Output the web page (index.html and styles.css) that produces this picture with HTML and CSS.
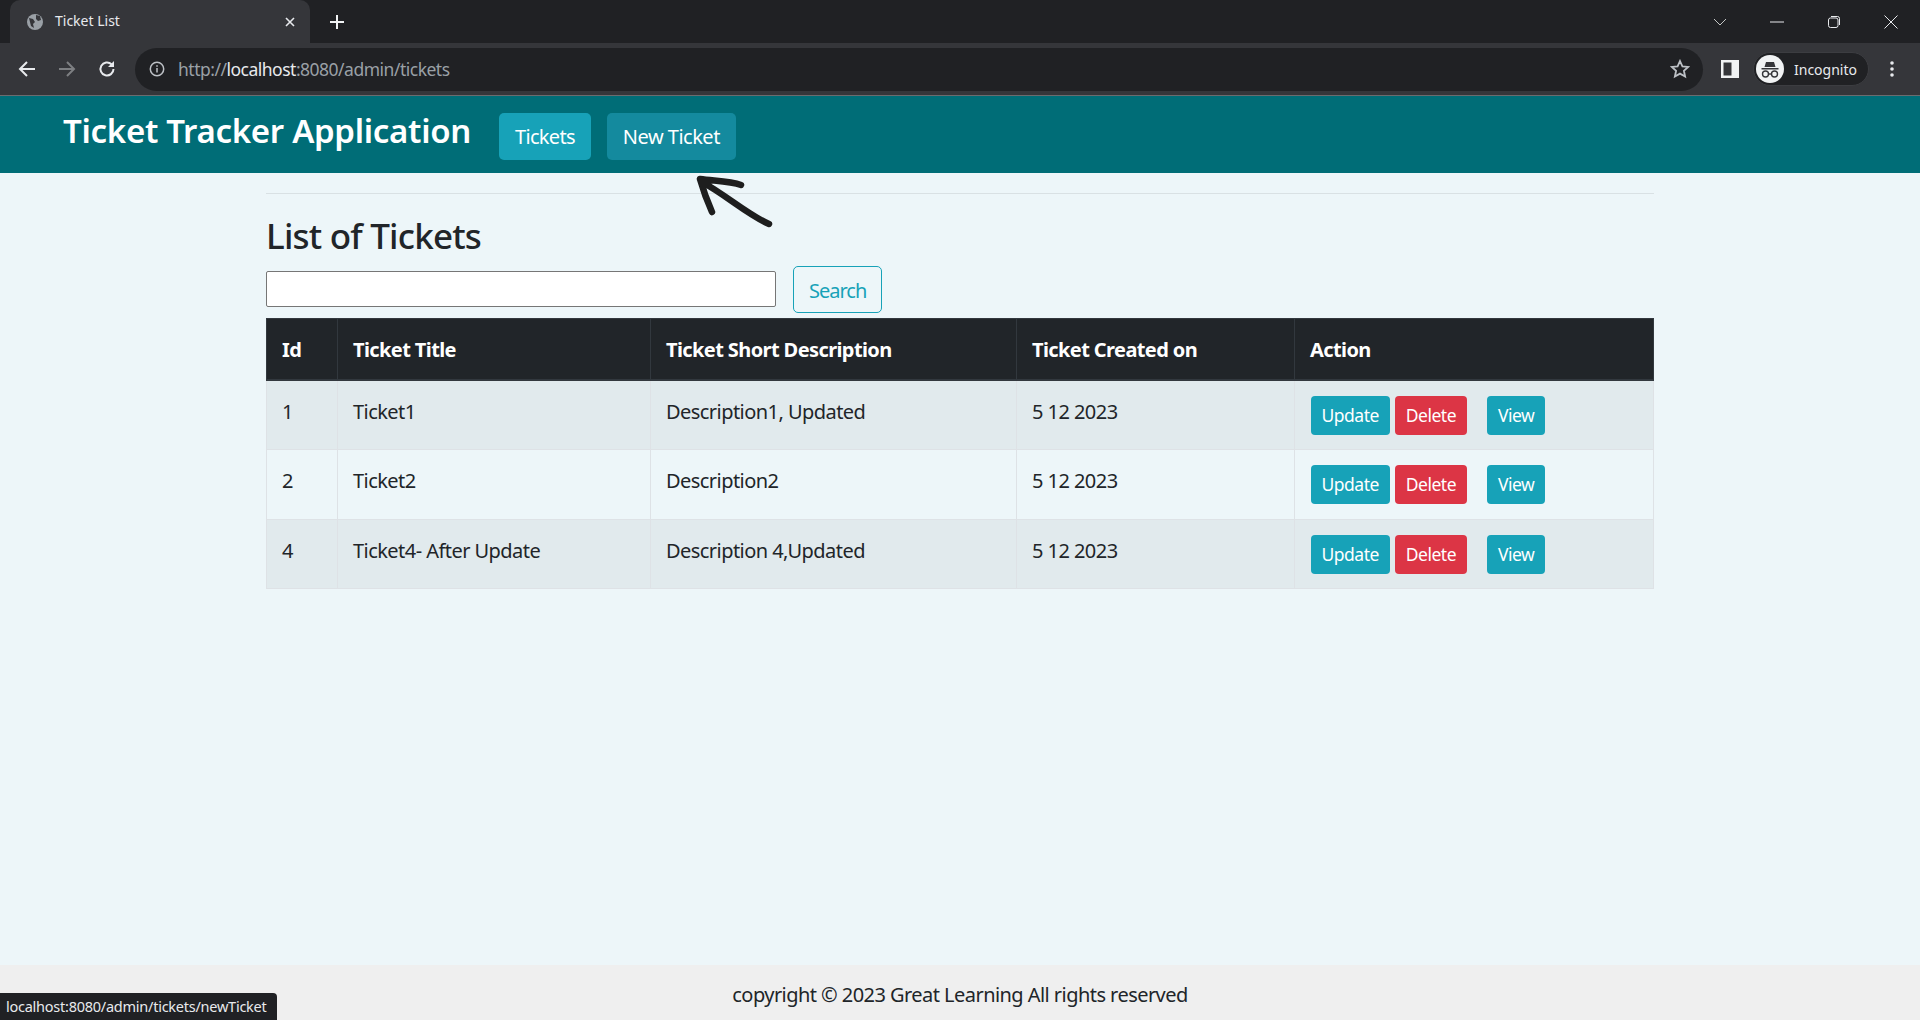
FILE: index.html
```html
<!DOCTYPE html>
<html lang="en">
<head>
    <meta charset="UTF-8">
    <meta name="viewport" content="width=device-width, initial-scale=1.0">
    <title>Ticket List</title>
    <link rel="stylesheet" href="styles.css">
</head>
<body>
    <div class="chrome">
        <div class="tabstrip">
            <div class="tab">
                <svg class="favicon" width="18" height="18" viewBox="0 0 18 18"><circle cx="9" cy="9" r="8" fill="#9aa0a6"/><path d="M3 5l4 1 2 3-2 2 1 4-3-2-1-4zM10 2l4 1 1 4-3 1-2-2z" fill="#35363a"/></svg>
                <span class="tab-title">Ticket List</span>
                <svg class="tab-close" width="12" height="12" viewBox="0 0 12 12"><path d="M2 2l8 8M10 2l-8 8" stroke="#e8eaed" stroke-width="1.6"/></svg>
            </div>
            <svg class="new-tab" width="16" height="16" viewBox="0 0 16 16"><path d="M8 1v14M1 8h14" stroke="#f1f3f4" stroke-width="2"/></svg>
            <div class="window-btns">
                <svg width="14" height="14" viewBox="0 0 14 14"><path d="M1 4l6 6 6-6" fill="none" stroke="#c4c7c5" stroke-width="1"/></svg>
                <svg width="14" height="14" viewBox="0 0 14 14"><path d="M0 7h14" stroke="#e8eaed" stroke-width="1"/></svg>
                <svg width="14" height="14" viewBox="0 0 14 14"><rect x="1.5" y="3" width="9.500" height="9.500" rx="2" fill="none" stroke="#e8eaed"/><path d="M4 1.500h6.500a2 2 0 0 1 2 2V10" fill="none" stroke="#e8eaed"/></svg>
                <svg width="14" height="14" viewBox="0 0 14 14"><path d="M0.500 0.500l13 13M13.500 0.500l-13 13" stroke="#e8eaed" stroke-width="1"/></svg>
            </div>
        </div>
        <div class="toolbar">
            <svg class="nav-icon" width="18" height="18" viewBox="0 0 18 18"><path d="M17 9H2M9 2L2 9l7 7" fill="none" stroke="#e8eaed" stroke-width="2"/></svg>
            <svg class="nav-icon" width="18" height="18" viewBox="0 0 18 18"><path d="M1 9h15M9 2l7 7-7 7" fill="none" stroke="#7d7f82" stroke-width="2"/></svg>
            <svg class="nav-icon" width="18" height="18" viewBox="0 0 18 18"><path d="M15.500 9a6.500 6.500 0 1 1-2-4.700" fill="none" stroke="#e8eaed" stroke-width="2"/><path d="M16 1v6h-6z" fill="#e8eaed"/></svg>
            <div class="omnibox">
                <svg width="16" height="16" viewBox="0 0 16 16"><circle cx="8" cy="8" r="6.700" fill="none" stroke="#bdc1c6" stroke-width="1.500"/><path d="M8 7v4.500M8 4.200v1.600" stroke="#bdc1c6" stroke-width="1.500"/></svg>
                <span class="url"><span class="url-dim">http://</span>localhost<span class="url-dim">:8080/admin/tickets</span></span>
                <svg class="star" width="20" height="20" viewBox="0 0 20 20"><path d="M10 2l2.400 5.300 5.800.6-4.300 3.900 1.200 5.700L10 14.600l-5.100 2.900 1.200-5.700L1.800 7.900l5.800-.6z" fill="none" stroke="#bdc1c6" stroke-width="1.800"/></svg>
            </div>
            <svg class="side-panel" width="18" height="18" viewBox="0 0 18 18"><path d="M0 0h18v18H0z M2.500 2.500v13h8v-13z" fill="#f1f3f4" fill-rule="evenodd"/></svg>
            <div class="profile">
                <svg width="28" height="28" viewBox="0 0 28 28"><circle cx="14" cy="14" r="14" fill="#f1f3f4"/><path d="M10 7h8l1.500 5h-11zM5.500 13h17v1.500h-17z" fill="#35363a"/><circle cx="9.500" cy="19" r="3" fill="none" stroke="#35363a" stroke-width="1.400"/><circle cx="18.500" cy="19" r="3" fill="none" stroke="#35363a" stroke-width="1.400"/><path d="M12.500 19h3" stroke="#35363a" stroke-width="1.400"/></svg>
                <span>Incognito</span>
            </div>
            <svg class="menu-dots" width="6" height="18" viewBox="0 0 6 18"><circle cx="3" cy="3" r="1.800" fill="#e8eaed"/><circle cx="3" cy="9" r="1.800" fill="#e8eaed"/><circle cx="3" cy="15" r="1.800" fill="#e8eaed"/></svg>
        </div>
    </div>

    <header class="app-bar">
        <span class="app-title">Ticket Tracker Application</span>
        <a class="btn btn-info btn-tickets">Tickets</a>
        <a class="btn btn-info btn-hover">New Ticket</a>
    </header>

    <main class="page">
        <hr class="rule">
        <h3 class="page-title">List of Tickets</h3>
        <form class="search-form">
            <input class="search-input" type="text">
            <button class="btn btn-outline" type="button">Search</button>
        </form>
        <table class="tickets">
            <colgroup>
                <col class="col-id"><col class="col-title"><col class="col-desc"><col class="col-date"><col class="col-action">
            </colgroup>
            <thead>
                <tr><th>Id</th><th>Ticket Title</th><th>Ticket Short Description</th><th>Ticket Created on</th><th>Action</th></tr>
            </thead>
            <tbody>
                <tr>
                    <td>1</td><td>Ticket1</td><td>Description1, Updated</td><td>5 12 2023</td>
                    <td><div class="actions"><a class="btn-sm btn-info">Update</a><a class="btn-sm btn-danger">Delete</a><a class="btn-sm btn-info btn-view">View</a></div></td>
                </tr>
                <tr>
                    <td>2</td><td>Ticket2</td><td>Description2</td><td>5 12 2023</td>
                    <td><div class="actions"><a class="btn-sm btn-info">Update</a><a class="btn-sm btn-danger">Delete</a><a class="btn-sm btn-info btn-view">View</a></div></td>
                </tr>
                <tr>
                    <td>4</td><td>Ticket4- After Update</td><td>Description 4,Updated</td><td>5 12 2023</td>
                    <td><div class="actions"><a class="btn-sm btn-info">Update</a><a class="btn-sm btn-danger">Delete</a><a class="btn-sm btn-info btn-view">View</a></div></td>
                </tr>
            </tbody>
        </table>
    </main>

    <footer class="footer">copyright © 2023 Great Learning All rights reserved</footer>

    <svg class="scribble" width="90" height="60" viewBox="0 0 90 60"><path d="M14 10C28 12 44 12 55 16M14 10C18 24 22 34 26 43M16 13C40 26 62 46 83 55" fill="none" stroke="#1e1e1e" stroke-width="6.500" stroke-linecap="round"/></svg>
    <div class="status-bubble">localhost:8080/admin/tickets/newTicket</div>
</body>
</html>
```

FILE: styles.css
```css
* {
    box-sizing: border-box;
}
body {
    font-family: "Noto Sans", "Open Sans", Arial, sans-serif;
    font-size: 20px;
    color: #212529;
    background-color: #edf6f9;
    margin: 0;
    height: 1020px;
    overflow: hidden;
    display: flex;
    flex-direction: column;
    position: relative;
}

/* browser chrome */
.chrome {
    flex: none;
    height: 96px;
    background-color: #35363a;
    border-bottom: 1px solid #6b6c6f;
}
.tabstrip {
    height: 43px;
    background-color: #202124;
    display: flex;
    align-items: center;
}
.tab {
    width: 300px;
    height: 43px;
    margin-left: 10px;
    padding: 0 14px 0 16px;
    background-color: #35363a;
    border-radius: 10px 10px 0 0;
    display: flex;
    align-items: center;
    color: #e8eaed;
    font-size: 14px;
}
.tab-title {
    margin-left: 11px;
    margin-top: -2px;
    flex: 1;
}
.new-tab {
    margin-left: 19px;
}
.window-btns {
    margin-left: auto;
    width: 207px;
    padding-right: 22px;
    display: flex;
    justify-content: space-between;
    align-items: center;
}
.toolbar {
    height: 52px;
    display: flex;
    align-items: center;
    position: relative;
}
.nav-icon {
    margin-left: 19px;
    margin-right: 3px;
}
.nav-icon:first-child {
    margin-left: 18px;
}
.omnibox {
    width: 1568px;
    height: 43px;
    margin-left: 16px;
    padding: 0 13px 0 14px;
    background-color: #202124;
    border-radius: 22px;
    display: flex;
    align-items: center;
}
.url {
    margin-left: 13px;
    font-size: 17.500px;
    letter-spacing: -0.5px;
    color: #e8eaed;
}
.url-dim {
    color: #9aa0a6;
}
.star {
    margin-left: auto;
}
.side-panel {
    margin-left: 18px;
}
.profile {
    width: 116px;
    height: 34px;
    margin-left: 14px;
    padding-left: 2px;
    background-color: #202124;
    border: 1px solid #3c3d41;
    border-radius: 17px;
    display: flex;
    align-items: center;
    gap: 10px;
    color: #e8eaed;
    font-size: 14px;
}
.menu-dots {
    margin-left: 20px;
}

/* app header */
.app-bar {
    flex: none;
    height: 77px;
    padding-left: 63px;
    background-color: #006d77;
    display: flex;
    align-items: center;
}
.app-title {
    font-size: 33px;
    font-weight: 600;
    color: #fff;
    margin-right: 28px;
    margin-top: -8px;
    letter-spacing: -0.3px;
    white-space: nowrap;
}
.btn {
    display: inline-block;
    height: 47px;
    line-height: 45px;
    padding: 0 15px;
    border: 1px solid transparent;
    border-radius: 5px;
    font-family: inherit;
    font-size: 20px;
    letter-spacing: -0.5px;
}
.app-bar .btn {
    margin-right: 16px;
    margin-top: 3px;
}
.btn-tickets {
    letter-spacing: -0.7px;
}
.btn-info {
    background-color: #17a2b8;
    color: #fff;
}
.btn-hover {
    background-color: #148a9e;
}
.btn-danger {
    background-color: #dc3545;
    color: #fff;
}
.btn-outline {
    background-color: transparent;
    border-color: #17a2b8;
    color: #17a2b8;
    letter-spacing: -1px;
    line-height: 47px;
}

/* page body */
.page {
    flex: 1;
    width: 1388px;
    margin: 0 auto;
}
.rule {
    margin: 20px 0 0;
    border: 0;
    border-top: 1px solid #d9e1e4;
}
.page-title {
    margin: 21px 0 0;
    font-size: 35px;
    font-weight: 500;
    line-height: 42px;
    letter-spacing: -0.8px;
}
.search-form {
    margin-top: 9px;
    display: flex;
    align-items: center;
    gap: 17px;
}
.search-input {
    width: 510px;
    height: 36px;
    margin-bottom: 2px;
    border: 1px solid #767676;
    border-radius: 2px;
    background-color: #fff;
}
.tickets {
    width: 1387px;
    margin-top: 5px;
    border-collapse: collapse;
    table-layout: fixed;
}
.col-id { width: 71px; }
.col-title { width: 313px; }
.col-desc { width: 366px; }
.col-date { width: 278px; }
.col-action { width: 359px; }

.tickets th {
    height: 61px;
    padding: 1px 15px 0;
    background-color: #212529;
    border: 1px solid #32383e;
    border-bottom: 2px solid #32383e;
    color: #fff;
    font-size: 20px;
    font-weight: 700;
    text-align: left;
    letter-spacing: -0.6px;
}
.tickets td {
    height: 70px;
    padding: 16px 15px 0;
    border: 1px solid #dee2e6;
    vertical-align: top;
    line-height: 30px;
    letter-spacing: -0.55px;
}
.tickets tbody tr:nth-child(odd) {
    background-color: #e1eaed;
}
.tickets tbody tr:last-child td {
    height: 69px;
}
.actions {
    display: flex;
    gap: 5px;
    margin: -1px 0 0 0.5px;
}
.btn-sm {
    height: 39px;
    line-height: 39px;
    padding: 0 11px;
    border-radius: 4px;
    font-size: 17.500px;
    letter-spacing: -0.5px;
}
.btn-view {
    margin-left: 15px;
}

/* footer */
.footer {
    flex: none;
    height: 55px;
    padding-top: 16px;
    background-color: #efefef;
    text-align: center;
    letter-spacing: -0.55px;
}

/* overlays */
.scribble {
    position: absolute;
    left: 686px;
    top: 169px;
}
.status-bubble {
    position: absolute;
    left: 0;
    bottom: 0;
    width: 277px;
    height: 27px;
    padding-left: 6px;
    line-height: 27px;
    background-color: #202124;
    border-top-right-radius: 4px;
    color: #e8eaed;
    font-size: 14.500px;
    letter-spacing: -0.25px;
    white-space: nowrap;
}
```
